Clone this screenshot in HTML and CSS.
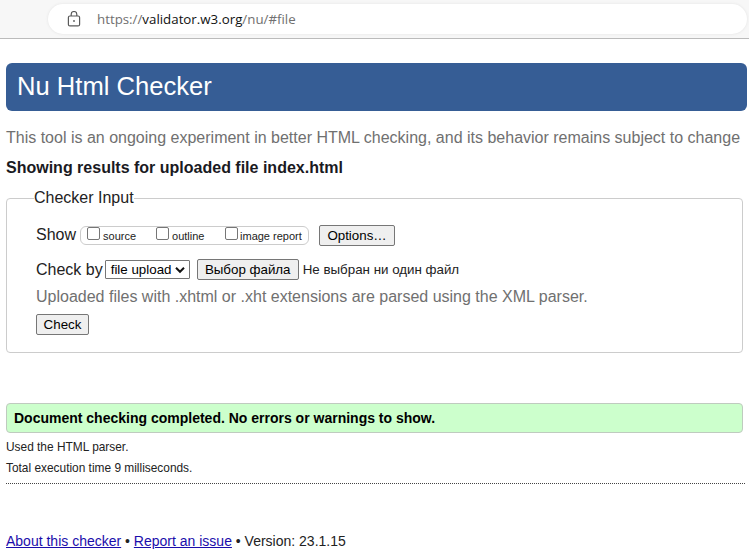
FILE: index.html
```html
<!DOCTYPE html>
<html lang="en">
<head>
<meta charset="utf-8">
<title>Nu Html Checker</title>
<link rel="stylesheet" href="styles.css">
</head>
<body>
<div class="browser-bar">
  <div class="address">
    <svg class="lock" viewBox="0 0 14 16" width="14" height="16" fill="none" stroke="#5a5a5a" stroke-width="1.2"><rect x="1.4" y="5" width="11.2" height="9.9" rx="1.5"/><path d="M4.2 5V3.3a2.8 2.8 0 0 1 5.6 0V5"/><circle cx="7" cy="10" r=".9" fill="#5a5a5a" stroke="none"/></svg>
    <span class="url">https://<b>validator.w3.org</b>/nu/#file</span>
  </div>
</div>
<main>
  <h1>Nu Html Checker</h1>
  <p class="note">This tool is an ongoing experiment in better HTML checking, and its behavior remains subject to change</p>
  <h2>Showing results for uploaded file index.html</h2>
  <fieldset>
    <legend>Checker Input</legend>
    <div class="row show">
      <span class="label">Show</span>
      <span class="checks">
        <label class="c1"><i class="box"></i>source</label>
        <label class="c2"><i class="box"></i>outline</label>
        <label class="c3"><i class="box"></i>image report</label>
      </span>
      <button class="options">Options…</button>
    </div>
    <div class="row by">
      <span class="label">Check by</span>
      <span class="select">file upload<svg viewBox="0 0 10 8" width="10" height="8" fill="none" stroke="#111" stroke-width="2"><path d="M1 1.8l4 4 4-4"/></svg></span>
      <button class="file">Выбор файла</button>
      <span class="nofile">Не выбран ни один файл</span>
    </div>
    <p class="hint">Uploaded files with .xhtml or .xht extensions are parsed using the XML parser.</p>
    <button class="check">Check</button>
  </fieldset>
  <p class="success">Document checking completed. No errors or warnings to show.</p>
  <p class="small">Used the HTML parser.</p>
  <p class="small">Total execution time 9 milliseconds.</p>
  <hr>
  <footer><a href="#">About this checker</a> • <a href="#">Report an issue</a> • Version: 23.1.15</footer>
</main>
</body>
</html>
```

FILE: styles.css
```css
* { box-sizing: border-box; }
body { margin: 0; height: 557px; overflow: hidden; background: #fff; color: #222; font: 16px/20px "Liberation Sans", Arial, sans-serif; white-space: nowrap; }
h1, h2, p { margin: 0; }
.browser-bar { height: 39px; padding: 4px 2px 0 48px; background: #f7f7f7; border-bottom: 1px solid #bbb; }
.address { display: flex; align-items: center; height: 30px; padding-left: 19px; border-radius: 15px; background: #fff; box-shadow: 0 0 3px #e2e2e2; }
.url { margin-left: 16px; font: 13.3px/20px "Open Sans", sans-serif; color: #707070; }
.url b { font-weight: 400; color: #111; }
main { padding: 24px 2px 0 6px; }
h1 { height: 48px; padding-left: 11px; border-radius: 6px; background: #365d95; color: #fff; font-weight: 400; font-size: 25.6px; line-height: 46px; }
.note { margin-top: 17px; color: #707070; }
h2 { margin-top: 10px; font-size: 16px; line-height: 20px; color: #1a1a1f; }
fieldset { height: 165px; margin: 10px 4px 0 0; padding: 0 0 0 29px; border: 1px solid #ccc; border-radius: 4px; }
legend { height: 20px; margin-left: -2px; padding: 0; }
.row { display: flex; align-items: center; }
.show { margin-top: 17px; height: 21px; }
.show .label { margin-top: -2px; }
.checks { display: flex; align-items: center; width: 229px; height: 19px; margin-left: 4px; padding-left: 6px; border: 1px solid #ccc; border-radius: 6px; font-size: 11px; }
.checks label { display: flex; align-items: center; }
.c1 { width: 69px; } .c2 { width: 69px; }
.box { width: 13px; height: 13px; margin: -4px 3px 0 0; border: 1px solid #767676; border-radius: 2px; background: #fff; }
.c3 .box { margin-right: 2px; }
button { height: 21px; padding: 0; border: 1px solid #767676; border-radius: 2px; background: #efefef; color: #000; font: 13.33px/18px "Liberation Sans", Arial, sans-serif; }
.options { width: 76px; margin-left: 10px; }
.by { margin-top: 13px; height: 21px; }
.select { display: flex; align-items: center; justify-content: space-between; width: 85px; height: 19px; margin-left: 2px; padding: 0 4px 0 5px; border: 1px solid #767676; border-radius: 1px; font-size: 13.33px; color: #000; }
.file { width: 102px; margin-left: 7px; }
.nofile { margin-left: 4px; font-size: 13.33px; }
.hint { margin-top: 7px; color: #707070; }
.check { display: block; width: 53px; margin-top: 7px; }
.success { height: 30px; margin: 50px 4px 0 0; padding-left: 7px; border: 1px solid #bfcbbf; border-radius: 4px; background: #cfc; color: #000; font-size: 14px; font-weight: 700; line-height: 28px; }
.small { font-size: 11.9px; line-height: 21px; }
.success + .small { margin-top: 4px; }
hr { height: 0; margin: 4px 2px 0 0; border: 0; border-top: 1px dotted #444; }
footer { margin-top: 47px; font-size: 14px; }
a { color: #1a0dab; }
```
